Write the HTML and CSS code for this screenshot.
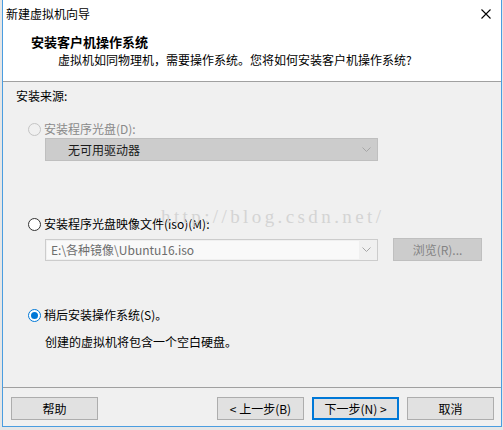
FILE: index.html
```html
<!DOCTYPE html>
<html lang="zh-CN">
<head>
    <meta charset="UTF-8">
    <title>新建虚拟机向导</title>
    <link rel="stylesheet" href="styles.css">
</head>
<body>

    <div class="window">
        <!-- Barra de título -->
        <div class="titlebar">
            <span>新建虚拟机向导</span>
            <svg class="close" width="10" height="10" viewBox="0 0 10 10">
                <path d="M0.5 0.5 L9.5 9.5 M9.5 0.5 L0.5 9.5" stroke="#000" stroke-width="1.1" fill="none"/>
            </svg>
        </div>

        <!-- Cabecera del asistente -->
        <div class="header">
            <div class="header-title">安装客户机操作系统</div>
            <div class="header-desc">虚拟机如同物理机，需要操作系统。您将如何安装客户机操作系统?</div>
        </div>

        <!-- Contenido -->
        <div class="content">
            <div class="section-label">安装来源:</div>

            <div class="option disabled opt-disc">
                <span class="radio"></span>
                <span>安装程序光盘(D):</span>
            </div>
            <div class="select">
                <span>无可用驱动器</span>
                <svg class="chevron" width="9" height="5" viewBox="0 0 9 5">
                    <path d="M0.5 0.5 L4.5 4.5 L8.5 0.5" stroke="#a6a6a6" fill="none"/>
                </svg>
            </div>

            <div class="option opt-iso">
                <span class="radio"></span>
                <span>安装程序光盘映像文件(iso)(M):</span>
            </div>
            <div class="iso-row">
                <div class="combo">
                    <div class="combo-field">E:\各种镜像\Ubuntu16.iso</div>
                    <svg class="chevron" width="9" height="5" viewBox="0 0 9 5">
                        <path d="M0.5 0.5 L4.5 4.5 L8.5 0.5" stroke="#a6a6a6" fill="none"/>
                    </svg>
                </div>
                <div class="browse">浏览(R)...</div>
            </div>

            <div class="option opt-later">
                <span class="radio checked"></span>
                <span>稍后安装操作系统(S)。</span>
            </div>
            <div class="note">创建的虚拟机将包含一个空白硬盘。</div>

            <div class="watermark">http://blog.csdn.net/</div>
        </div>

        <!-- Botones -->
        <div class="footer">
            <div class="btn">帮助</div>
            <div class="spacer"></div>
            <div class="btn">&lt; 上一步(B)</div>
            <div class="btn default">下一步(N) &gt;</div>
            <div class="btn">取消</div>
        </div>
    </div>

</body>
</html>
```

FILE: styles.css
```css
body {
    margin: 0;
    padding: 0;
    background-color: #e6e6e6;
    font-family: "Noto Sans CJK SC", "Noto Sans", sans-serif;
    font-size: 12px;
    color: #000;
}
.window {
    margin-left: 2px;
    width: 498px;
    height: 426px;
    border: 1px solid #4a9de0;
    border-top: none;
    background-color: #f0f0f0;
    display: flex;
    flex-direction: column;
}

/* Barra de título */
.titlebar {
    height: 27px;
    background-color: #fff;
    display: flex;
    align-items: center;
    justify-content: space-between;
    padding: 0 10px 0 3px;
    line-height: 16px;
}

/* Cabecera */
.header {
    height: 55px;
    background-color: #fff;
    border-bottom: 1px solid #a0a0a0;
    box-sizing: border-box;
}
.header-title {
    font-weight: bold;
    font-size: 13px;
    line-height: 18px;
    padding-left: 28px;
    margin-top: 6px;
}
.header-desc {
    line-height: 16px;
    padding-left: 55px;
    margin-top: 1px;
}

/* Contenido */
.content {
    flex: 1;
    position: relative;
    padding-left: 13px;
}
.section-label {
    line-height: 16px;
    margin-top: 6px;
}
.option {
    display: flex;
    align-items: center;
    gap: 3px;
    line-height: 16px;
    margin-left: 12px;
}
.opt-disc { margin-top: 17px; }
.opt-iso { margin-top: 55px; }
.opt-later { margin-top: 46px; }
.option.disabled {
    color: #8a8a8a;
}
.radio {
    width: 11px;
    height: 11px;
    border: 1px solid #333;
    border-radius: 50%;
    background-color: #fff;
    display: flex;
    align-items: center;
    justify-content: center;
}
.option.disabled .radio {
    border-color: #c4c4c4;
    background-color: #f0f0f0;
}
.radio.checked {
    border-color: #0078d7;
}
.radio.checked::after {
    content: "";
    width: 7px;
    height: 7px;
    border-radius: 50%;
    background-color: #0078d7;
}
.select {
    margin: 1px 0 0 29px;
    width: 333px;
    height: 23px;
    box-sizing: border-box;
    background-color: #cccccc;
    border: 1px solid #bfbfbf;
    display: flex;
    align-items: center;
    justify-content: space-between;
    padding: 0 6px 0 22px;
    color: #1a1a1a;
}
.iso-row {
    display: flex;
    align-items: center;
    margin: 6px 0 0 29px;
}
.combo {
    width: 333px;
    height: 22px;
    box-sizing: border-box;
    border: 1px solid #cccccc;
    background-color: #f0f0f0;
    display: flex;
    align-items: center;
    justify-content: space-between;
    padding-right: 6px;
}
.combo-field {
    width: 312px;
    height: 18px;
    margin-left: 1px;
    background-color: #f9f9f9;
    color: #6d6d6d;
    line-height: 18px;
    padding-left: 4px;
    box-sizing: border-box;
}
.browse {
    margin-left: 15px;
    width: 89px;
    height: 23px;
    box-sizing: border-box;
    background-color: #cccccc;
    border: 1px solid #bfbfbf;
    color: #838383;
    text-align: center;
    line-height: 21px;
}
.note {
    line-height: 16px;
    margin: 11px 0 0 29px;
}
/* Marca de agua sobre el contenido */
.watermark {
    position: absolute;
    left: 158px;
    top: 124px;
    font-family: "Liberation Serif", serif;
    font-size: 19px;
    letter-spacing: 3.4px;
    color: #d4d4d4;
}

/* Botones */
.footer {
    height: 39px;
    box-sizing: border-box;
    border-top: 1px solid #a0a0a0;
    display: flex;
    align-items: flex-start;
    gap: 8px;
    padding: 9px 7px 0 8px;
}
.spacer {
    flex: 1;
}
.btn {
    width: 87px;
    height: 23px;
    box-sizing: border-box;
    background-color: #e1e1e1;
    border: 1px solid #adadad;
    text-align: center;
    line-height: 21px;
}
.btn.default {
    border: 2px solid #0078d7;
    line-height: 19px;
}
```
